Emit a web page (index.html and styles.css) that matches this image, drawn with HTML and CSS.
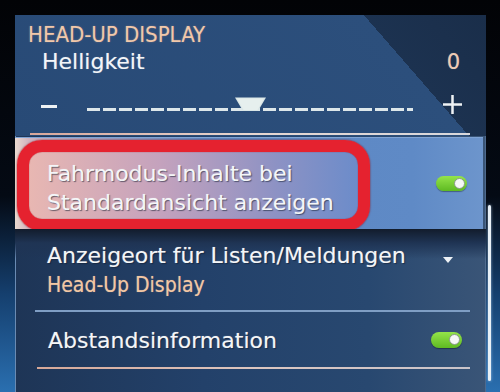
FILE: index.html
```html
<!DOCTYPE html>
<html lang="de">
<head>
<meta charset="utf-8">
<title>Head-Up Display</title>
<link rel="stylesheet" href="styles.css">
</head>
<body>
<div class="frame">
  <div class="gutter-left"></div>
  <main class="panel">
    <section class="hud">
      <h1 class="section-title">HEAD-UP DISPLAY</h1>
      <div class="value-row">
        <span class="label">Helligkeit</span>
        <span class="value">0</span>
      </div>
      <div class="slider">
        <span class="minus"></span>
        <div class="track">
          <svg class="thumb" width="31" height="15" viewBox="0 0 31 15"><polygon points="0,0.5 31,0.5 23,14 8,14" fill="#d9e6e6"/><polygon points="2,1.5 29,1.5 22.5,13 8.5,13" fill="#e6efee"/></svg>
        </div>
        <svg class="plus" width="19" height="19" viewBox="0 0 19 19"><rect x="8.25" y="0" width="2.5" height="19" fill="#eef2f4"/><rect x="0" y="8.25" width="19" height="2.5" fill="#eef2f4"/></svg>
      </div>
      <div class="rule rule-peach"></div>
    </section>

    <div class="row row-active">
      <div class="mark">
        <p class="item-text">Fahrmodus-Inhalte bei<br>Standardansicht anzeigen</p>
      </div>
      <span class="toggle"><span class="knob"></span></span>
    </div>

    <div class="row row-select">
      <div class="text-block">
        <p class="item-text">Anzeigeort für Listen/Meldungen</p>
        <p class="sub-text">Head-Up Display</p>
      </div>
      <span class="caret"></span>
    </div>
    <div class="rule rule-blue"></div>

    <div class="row row-switch">
      <p class="item-text">Abstandsinformation</p>
      <span class="toggle"><span class="knob"></span></span>
    </div>
    <div class="rule rule-peach2"></div>
  </main>
  <div class="gutter-right">
    <div class="scrollbar"></div>
  </div>
</div>
</body>
</html>
```

FILE: styles.css
```css
* { box-sizing: border-box; }
html, body { margin: 0; padding: 0; }
body {
  width: 500px;
  height: 392px;
  overflow: hidden;
  background: #000;
  font-family: "DejaVu Sans", "Liberation Sans", sans-serif;
  color: #f3f5f8;
}
p, h1 { margin: 0; }

.frame {
  display: flex;
  width: 500px;
  height: 392px;
  background: linear-gradient(to bottom, #020306 0%, #040a14 50%, #153f6e 75%, #2a6fb0 100%);
}
.gutter-left { width: 15px; flex: none; }
.gutter-right { width: 14px; flex: none; }
.scrollbar {
  margin: 205px 0 0 2px;
  width: 3px;
  height: 176px;
  background: #e8f0f6;
  border-radius: 2px;
  box-shadow: 0 0 3px rgba(200, 225, 255, 0.7);
}

.panel {
  margin-top: 15px;
  width: 471px;
  height: 377px;
  flex: none;
  display: flex;
  flex-direction: column;
  background: linear-gradient(to right, #1e3556 0%, #23416a 40%, #284870 75%, #3a5577 100%);
  box-shadow: inset 1px 0 0 #6a8bb3, inset -1px 0 0 #4e6a8e;
  overflow: hidden;
}

/* header section */
.hud {
  height: 121px;
  flex: none;
  padding-top: 9px;
  background: linear-gradient(49deg, #284a76 0%, #2c4f7c 78.8%, #1c3250 78.8%, #1a2e4a 100%);
}
.section-title {
  margin-left: 13px;
  font-family: "DejaVu Sans Condensed", "DejaVu Sans", sans-serif;
  font-stretch: condensed;
  font-weight: normal;
  font-size: 22px;
  line-height: 22px;
  color: #f1c8aa;
  text-shadow: 0 0 2px rgba(255, 190, 150, 0.35);
}
.value-row {
  display: flex;
  justify-content: space-between;
  margin-top: 5px;
  padding: 0 26px 0 27px;
  font-size: 22px;
  line-height: 22px;
  text-shadow: 0 0 1px rgba(255, 255, 255, 0.4);
}
.value { color: #f0cbb3; font-size: 21px; }

.slider {
  display: flex;
  align-items: center;
  height: 20px;
  margin-top: 22px;
  padding-left: 26px;
}
.minus {
  width: 16px;
  height: 3px;
  margin-top: 2px;
  background: #eef2f4;
  flex: none;
}
.track {
  position: relative;
  width: 326px;
  height: 3px;
  margin: 8px 30px 0 30px;
  flex: none;
  background: repeating-linear-gradient(to right, #dde7ea 0 13px, transparent 13px 16px);
}
.thumb {
  position: absolute;
  left: 148px;
  top: -11px;
}
.plus { flex: none; margin-top: -2px; }

.rule { height: 2px; flex: none; }
.rule-peach {
  margin: 18px 16px 0 15px;
  background: linear-gradient(to right, #d9a79a, #e6d6d0 50%, #d8d8dc);
}

/* rows */
.row {
  display: flex;
  align-items: center;
  justify-content: space-between;
  flex: none;
}
.item-text {
  font-size: 22px;
  line-height: 29px;
  color: #f4f6f8;
  text-shadow: 1px 1px 1px rgba(10, 20, 40, 0.55), 0 0 1px rgba(255, 255, 255, 0.5);
}
.row-active {
  height: 92px;
  margin: 1px 3px 0 0;
  align-items: flex-start;
  padding-right: 16px;
  background: linear-gradient(to right, #ead9cf 0%, #cfb4c0 3%, #5b86c2 40%, #5f8ac6 85%, #6d95cc 100%);
  box-shadow: inset 0 1px 0 #7fa3d4;
}
.mark {
  margin: 3px 0 0 2px;
  width: 353px;
  height: 91px;
  border: 12px solid #e5222f;
  border-radius: 25px;
  padding: 7px 0 0 18px;
  background: linear-gradient(to right, #e8b7b2 0%, #c4a2bd 40%, #8d92c4 75%, #6c8cca 100%);
  box-shadow: 0 0 2px #8e1520, inset 0 0 1px #9a1020;
}
.row-active .toggle { margin-top: 39px; }

.toggle {
  display: flex;
  justify-content: flex-end;
  align-items: center;
  width: 31px;
  height: 15px;
  padding-right: 2px;
  border-radius: 8px;
  background: linear-gradient(#94e44a, #5fba22);
  box-shadow: 0 1px 1px rgba(0, 0, 0, 0.35);
  flex: none;
}
.knob {
  width: 11px;
  height: 11px;
  border-radius: 50%;
  background: #f6f8f6;
  border: 1px solid #8a9a88;
}

.row-select {
  height: 81px;
  padding: 16px 33px 0 32px;
  align-items: flex-start;
  background: linear-gradient(to bottom, #121c2c 0px, #1f3454 14px, transparent 30px);
}
.row-select .item-text { line-height: 22px; }
.sub-text {
  margin-top: 7px;
  font-family: "DejaVu Sans Condensed", "DejaVu Sans", sans-serif;
  font-stretch: condensed;
  font-size: 21px;
  line-height: 22px;
  color: #f2c7a4;
  text-shadow: 0 0 1px rgba(255, 200, 160, 0.5);
}
.caret {
  width: 0;
  height: 0;
  margin-top: 12px;
  border-left: 5px solid transparent;
  border-right: 5px solid transparent;
  border-top: 6px solid #eef2f6;
}
.rule-blue {
  margin: 0 16px 0 20px;
  background: #7f9ec4;
}

.row-switch {
  height: 55px;
  padding: 0 24px 0 33px;
}
.row-switch .item-text { line-height: 22px; margin-top: 2px; }
.row-switch .toggle { height: 16px; }

.rule-peach2 {
  margin: 0 16px 0 22px;
  background: linear-gradient(to right, #d6a898, #dcc6c0 50%, #c9c4ca);
}
```
